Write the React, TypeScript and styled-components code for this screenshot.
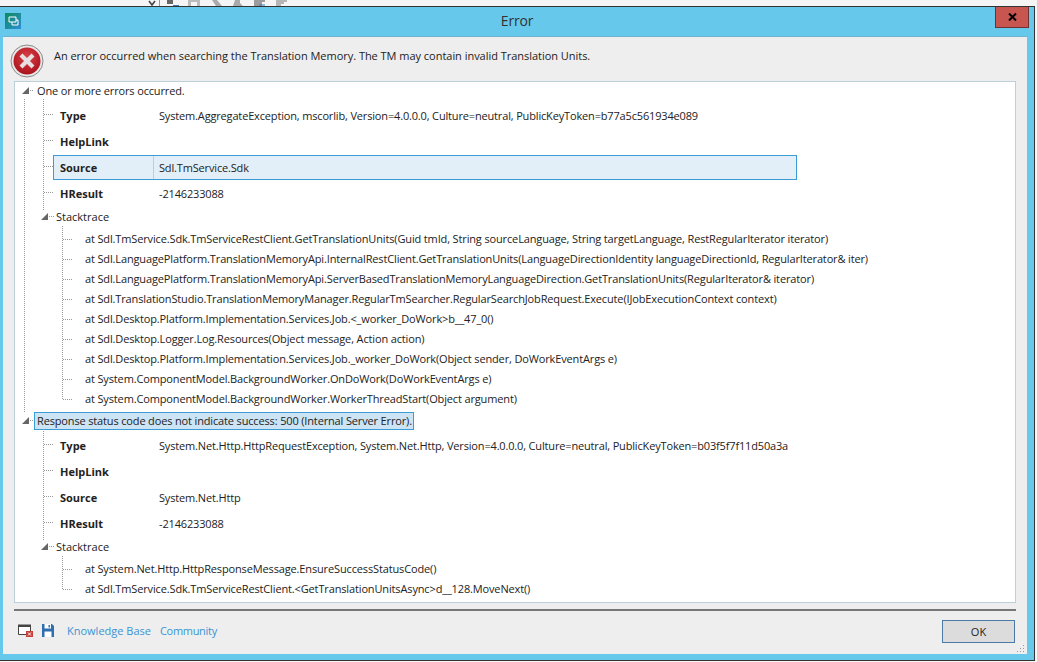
import styled, { createGlobalStyle } from "styled-components";

const GlobalStyle = createGlobalStyle`
  html, body {
    margin: 0;
    padding: 0;
    background: #f5f5f5;
  }
  body {
    width: 1037px;
    height: 662px;
    overflow: hidden;
    font-family: "Open Sans", "Noto Sans", sans-serif;
    font-size: 11px;
    color: #222;
  }
`;

const properties = (type: string, source: string, highlighted = false) => [
  { label: "Type", value: type, highlighted: false },
  { label: "HelpLink", value: "", highlighted: false },
  { label: "Source", value: source, highlighted },
  { label: "HResult", value: "-2146233088", highlighted: false },
];

const errors = [
  {
    title: "One or more errors occurred.",
    selected: false,
    props: properties(
      "System.AggregateException, mscorlib, Version=4.0.0.0, Culture=neutral, PublicKeyToken=b77a5c561934e089",
      "Sdl.TmService.Sdk",
      true
    ),
    stack: [
      "at Sdl.TmService.Sdk.TmServiceRestClient.GetTranslationUnits(Guid tmId, String sourceLanguage, String targetLanguage, RestRegularIterator iterator)",
      "at Sdl.LanguagePlatform.TranslationMemoryApi.InternalRestClient.GetTranslationUnits(LanguageDirectionIdentity languageDirectionId, RegularIterator& iter)",
      "at Sdl.LanguagePlatform.TranslationMemoryApi.ServerBasedTranslationMemoryLanguageDirection.GetTranslationUnits(RegularIterator& iterator)",
      "at Sdl.TranslationStudio.TranslationMemoryManager.RegularTmSearcher.RegularSearchJobRequest.Execute(IJobExecutionContext context)",
      "at Sdl.Desktop.Platform.Implementation.Services.Job.<_worker_DoWork>b__47_0()",
      "at Sdl.Desktop.Logger.Log.Resources(Object message, Action action)",
      "at Sdl.Desktop.Platform.Implementation.Services.Job._worker_DoWork(Object sender, DoWorkEventArgs e)",
      "at System.ComponentModel.BackgroundWorker.OnDoWork(DoWorkEventArgs e)",
      "at System.ComponentModel.BackgroundWorker.WorkerThreadStart(Object argument)",
    ],
  },
  {
    title: "Response status code does not indicate success: 500 (Internal Server Error).",
    selected: true,
    props: properties(
      "System.Net.Http.HttpRequestException, System.Net.Http, Version=4.0.0.0, Culture=neutral, PublicKeyToken=b03f5f7f11d50a3a",
      "System.Net.Http"
    ),
    stack: [
      "at System.Net.Http.HttpResponseMessage.EnsureSuccessStatusCode()",
      "at Sdl.TmService.Sdk.TmServiceRestClient.<GetTranslationUnitsAsync>d__128.MoveNext()",
    ],
  },
];

const Expander = () => (
  <ExpanderMark>
    <svg width="7" height="7" viewBox="0 0 7 7">
      <path d="M0 7 L7 0 L7 7 Z" fill="#666" />
    </svg>
  </ExpanderMark>
);

const ErrorIcon = () => (
  <svg width="34" height="34" viewBox="0 0 34 34">
    <defs>
      <radialGradient id="redFill" cx="50%" cy="35%" r="70%">
        <stop offset="0%" stopColor="#d9404a" />
        <stop offset="100%" stopColor="#a80e18" />
      </radialGradient>
    </defs>
    <circle cx="17" cy="17" r="16" fill="#e8e8e8" stroke="#8a8a8a" />
    <circle cx="17" cy="17" r="13.5" fill="url(#redFill)" />
    <path d="M11 11 L23 23 M23 11 L11 23" stroke="#e6e0e0" strokeWidth="4.2" strokeLinecap="butt" />
  </svg>
);

const AppIcon = () => (
  <svg width="16" height="16" viewBox="0 0 16 16">
    <defs>
      <linearGradient id="appFill" x1="0" y1="0" x2="1" y2="1">
        <stop offset="0%" stopColor="#0c8a5a" />
        <stop offset="100%" stopColor="#2f8fd8" />
      </linearGradient>
    </defs>
    <rect width="16" height="16" fill="url(#appFill)" />
    <path d="M4 4h7v5H4z M7 9v3h6V7h-2" fill="none" stroke="#fff" strokeWidth="1" />
  </svg>
);

const ToolbarScraps = () => (
  <svg width="150" height="6" viewBox="0 0 150 6">
    <path d="M1 1 L4 5 L7 1" fill="none" stroke="#444" strokeWidth="1.6" />
    <path d="M11.5 0V6" stroke="#999" />
    <path d="M19 0h6v4h-6z" fill="#666" />
    <path d="M25 5h6v1h-6z" fill="#3b78b8" />
    <path d="M40 0h12v6H40z M43 2h6v4h-6z" fill="#bbb" fillRule="evenodd" />
    <path d="M64 0h5l5 6h-6z" fill="#aaa" />
    <path d="M87 0h5v3l3 3H85z" fill="#aaa" />
    <path d="M106 1h11M106 3h8M106 5h8" stroke="#444" />
    <path d="M111 5h6" stroke="#3b78b8" />
    <path d="M128 1h11M128 3h8M128 5h5" stroke="#777" />
  </svg>
);

const ShowDetailsIcon = () => (
  <svg width="15" height="13" viewBox="0 0 15 13">
    <path d="M0.5 1.5h12v9h-12z" fill="#fff" stroke="#444" />
    <path d="M0 0.5h13v2.5H0z" fill="#444" />
    <path d="M8 7h7v6H8z" fill="#c9403a" />
    <path d="M10 8.5l3 3M13 8.5l-3 3" stroke="#fff" />
  </svg>
);

const SaveIcon = () => (
  <svg width="12" height="13" viewBox="0 0 12 13">
    <path d="M0 0h10l2 2v11H0z" fill="#2f6fb0" />
    <path d="M2.5 0h6.5v4.5H2.5z" fill="#fff" />
    <path d="M6.5 1h1.5v2.5H6.5z" fill="#2f6fb0" />
    <path d="M2.5 7.5h7V13h-7z" fill="#fff" />
  </svg>
);

const Grip = () => (
  <GripMark>
    <svg width="8" height="8" viewBox="0 0 8 8">
      <path d="M6 0h1v1H6z M6 3h1v1H6z M3 3h1v1H3z M6 6h1v1H6z M3 6h1v1H3z M0 6h1v1H0z" fill="#999" />
    </svg>
  </GripMark>
);

const App = () => (
  <>
    <GlobalStyle />
    <Toolbar>
      <ToolbarScraps />
    </Toolbar>
    <Window>
      <TitleBar>
        <TitleIcon>
          <AppIcon />
        </TitleIcon>
        <Title>Error</Title>
        <TitleControls>
          <CloseButton>
            <svg width="9" height="8" viewBox="0 0 9 8">
              <path d="M1 0.5 L8 7.5 M8 0.5 L1 7.5" stroke="#000" strokeWidth="2" />
            </svg>
          </CloseButton>
        </TitleControls>
      </TitleBar>
      <Client>
        <Header>
          <ErrorIcon />
          <Message>
            An error occurred when searching the Translation Memory. The TM may contain invalid Translation Units.
          </Message>
        </Header>
        <TreePanel>
          {errors.map((error, index) => (
            <ErrorGroup key={error.title}>
              <RootRow>
                <Expander />
                <RootLabel $selected={error.selected}>{error.title}</RootLabel>
              </RootRow>
              <Branch $continues={index < errors.length - 1}>
                <PropertyList>
                  {error.props.map((prop) => (
                    <PropertyRow key={prop.label}>
                      <PropertyCells $highlighted={prop.highlighted}>
                        <PropertyLabel $highlighted={prop.highlighted}>{prop.label}</PropertyLabel>
                        <PropertyValue>{prop.value}</PropertyValue>
                      </PropertyCells>
                    </PropertyRow>
                  ))}
                </PropertyList>
                <StackRow>
                  <Expander />
                  <StackTitle>Stacktrace</StackTitle>
                </StackRow>
                <StackList>
                  {error.stack.map((line) => (
                    <StackLine key={line}>{line}</StackLine>
                  ))}
                </StackList>
              </Branch>
            </ErrorGroup>
          ))}
        </TreePanel>
        <Separator />
        <Footer>
          <FooterIcons>
            <ShowDetailsIcon />
            <SaveIcon />
          </FooterIcons>
          <FooterLink>Knowledge Base</FooterLink>
          <CommunityLink>Community</CommunityLink>
          <OkButton>OK</OkButton>
        </Footer>
        <Grip />
      </Client>
    </Window>
  </>
);

const Toolbar = styled.div`
  height: 6px;
  padding-left: 148px;
  display: flex;
  align-items: flex-start;
  line-height: 0;
`;

const Window = styled.div`
  width: 1035px;
  height: 655px;
  box-sizing: border-box;
  border-top: 1px solid #333;
  border-right: 1px solid #333;
  border-bottom: 1px solid #333;
  background: #66c9eb;
  display: flex;
  flex-direction: column;
`;

const TitleBar = styled.div`
  height: 29px;
  display: grid;
  grid-template-columns: 1fr auto 1fr;
  flex: none;
`;

const TitleIcon = styled.div`
  padding: 6px 0 0 5px;
  line-height: 0;
`;

const Title = styled.div`
  padding-top: 5px;
  font-size: 14px;
  line-height: 18px;
  letter-spacing: -0.2px;
  color: #333;
`;

const TitleControls = styled.div`
  display: flex;
  justify-content: flex-end;
  padding-right: 5px;
`;

const CloseButton = styled.div`
  width: 34px;
  height: 21px;
  box-sizing: border-box;
  background: #c75650;
  border: 1px solid #6e3230;
  border-top: none;
  display: flex;
  align-items: center;
  justify-content: center;
`;

const Client = styled.div`
  position: relative;
  width: 1024px;
  height: 618px;
  margin-left: 3px;
  box-sizing: border-box;
  background: #eee;
  border-top: 1px solid #6fb3d0;
  padding: 0 11px;
  display: flex;
  flex-direction: column;
`;

const Header = styled.div`
  height: 44px;
  display: flex;
  align-items: center;
  gap: 10px;
  margin-left: -4px;
  padding-top: 4px;
  box-sizing: border-box;
`;

const Message = styled.div`
  margin-top: -12px;
  letter-spacing: -0.03px;
  color: #222;
`;

const TreePanel = styled.div`
  height: 522px;
  box-sizing: border-box;
  background: #fff;
  border: 1px solid #bcd0da;
  flex: none;
`;

const ErrorGroup = styled.div`
  padding-bottom: 3px;
`;

const RootRow = styled.div`
  height: 17px;
  display: flex;
  align-items: center;
  padding-left: 7px;
  position: relative;
  &::before {
    content: "";
    position: absolute;
    left: 15px;
    top: 8px;
    width: 3px;
    border-top: 1px dotted #999;
  }
`;

const ExpanderMark = styled.span`
  width: 7px;
  height: 7px;
  line-height: 0;
  flex: none;
  margin-right: 5px;
`;

const RootLabel = styled.span<{ $selected: boolean }>`
  display: flex;
  align-items: center;
  height: 18px;
  box-sizing: border-box;
  padding: 0 1px 0 2px;
  letter-spacing: -0.15px;
  background: ${(p) => (p.$selected ? "#cde4f5" : "transparent")};
  border: 1px solid ${(p) => (p.$selected ? "#3a9bd5" : "transparent")};
`;

const Branch = styled.div<{ $continues: boolean }>`
  position: relative;
  padding-top: 3px;
  &::before {
    content: "";
    display: ${(p) => (p.$continues ? "block" : "none")};
    position: absolute;
    left: 9px;
    top: 0;
    bottom: -3px;
    border-left: 1px dotted #999;
  }
`;

const PropertyList = styled.div`
  position: relative;
  &::before {
    content: "";
    position: absolute;
    left: 28px;
    top: -3px;
    bottom: -4px;
    border-left: 1px dotted #999;
  }
`;

const PropertyRow = styled.div`
  height: 26px;
  position: relative;
  padding-left: 38px;
  display: flex;
  align-items: center;
  &::after {
    content: "";
    position: absolute;
    left: 29px;
    top: 12px;
    width: 9px;
    border-top: 1px dotted #999;
  }
`;

const PropertyCells = styled.div<{ $highlighted: boolean }>`
  width: 744px;
  height: 25px;
  box-sizing: border-box;
  display: flex;
  align-items: center;
  background: ${(p) => (p.$highlighted ? "#e3eff8" : "transparent")};
  border: 1px solid ${(p) => (p.$highlighted ? "#3a9bd5" : "transparent")};
`;

const PropertyLabel = styled.div<{ $highlighted: boolean }>`
  width: 100px;
  flex: none;
  height: 100%;
  box-sizing: border-box;
  padding-left: 6px;
  font-weight: 700;
  display: flex;
  align-items: center;
  border-right: 1px solid ${(p) => (p.$highlighted ? "#bcd0da" : "transparent")};
`;

const PropertyValue = styled.div`
  padding-left: 5px;
  white-space: nowrap;
  letter-spacing: -0.16px;
`;

const StackRow = styled.div`
  height: 20px;
  display: flex;
  align-items: center;
  padding-left: 26px;
  position: relative;
  &::before {
    content: "";
    position: absolute;
    left: 34px;
    top: 10px;
    width: 5px;
    border-top: 1px dotted #999;
  }
`;

const StackTitle = styled.span`
  margin-left: 3px;
`;

const StackList = styled.div`
  position: relative;
  padding-top: 3px;
  &::before {
    content: "";
    position: absolute;
    left: 47px;
    top: 0;
    bottom: 10px;
    border-left: 1px dotted #999;
  }
`;

const StackLine = styled.div`
  height: 20px;
  line-height: 20px;
  padding-left: 70px;
  white-space: nowrap;
  letter-spacing: -0.14px;
  position: relative;
  &::before {
    content: "";
    position: absolute;
    left: 48px;
    top: 10px;
    width: 9px;
    border-top: 1px dotted #999;
  }
`;

const Separator = styled.div`
  height: 2px;
  background: #777;
  margin-top: 6px;
  flex: none;
`;

const Footer = styled.div`
  flex: 1;
  display: flex;
  align-items: flex-start;
  gap: 9px;
  padding: 9px 1px 0 4px;
`;

const FooterIcons = styled.div`
  display: flex;
  align-items: center;
  gap: 9px;
  margin-right: 4px;
  padding-top: 4px;
  line-height: 0;
`;

const FooterLink = styled.a`
  color: #3a94d4;
  line-height: 22px;
  cursor: pointer;
`;

const CommunityLink = styled(FooterLink)`
  letter-spacing: -0.3px;
`;

const OkButton = styled.button`
  margin-left: auto;
  width: 73px;
  height: 23px;
  box-sizing: border-box;
  background: #dcdcdc;
  border: 1px solid #4a7aa5;
  font: inherit;
  color: #222;
  padding: 0;
`;

const GripMark = styled.span`
  position: absolute;
  right: 2px;
  bottom: 1px;
  line-height: 0;
`;

export default App;
